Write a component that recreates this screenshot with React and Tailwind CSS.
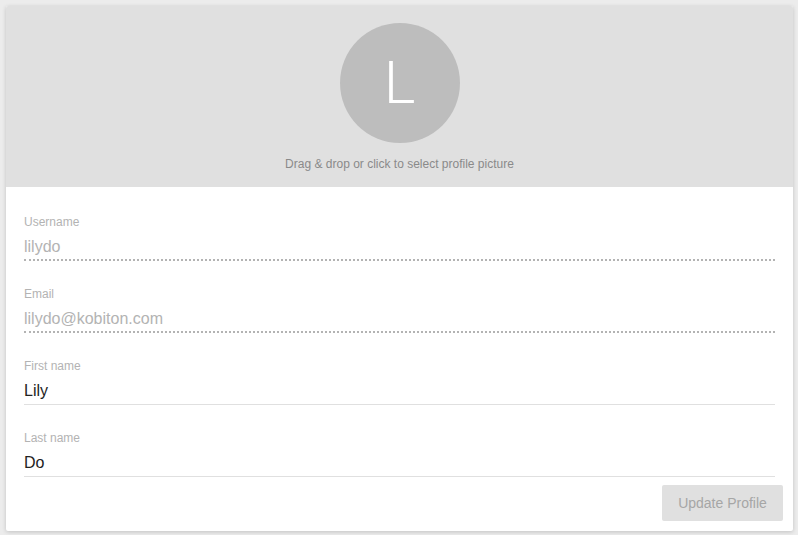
import React from "react";

const fields = [
  { label: "Username", value: "lilydo", disabled: true },
  { label: "Email", value: "lilydo@kobiton.com", disabled: true },
  { label: "First name", value: "Lily", disabled: false },
  { label: "Last name", value: "Do", disabled: false },
];

function Field({ label, value, disabled, last }) {
  return (
    <div className={last ? "pt-[1px]" : "h-[72px] pt-[1px]"}>
      <div className="text-[12px] leading-4 text-[#b3b3b3]">{label}</div>
      <div
        className={`mt-[5px] text-[16px] leading-6 ${
          disabled
            ? "text-[#b3b3b3] border-b-2 border-dotted border-[#b3b3b3]"
            : "text-[#222] pb-[1px] border-b border-[#e0e0e0]"
        }`}
      >
        {value}
      </div>
    </div>
  );
}

export default function App() {
  return (
    <div
      className="w-[798px] h-[535px] bg-[#ececec] pt-[6px] pl-[6px]"
      style={{ fontFamily: '"Liberation Sans", Arial, sans-serif' }}
    >
      <div className="w-[787px] h-[525px] bg-white rounded-[2px] shadow-[0_1px_4px_rgba(0,0,0,0.18)] overflow-hidden">
        {/* avatar dropzone */}
        <div className="h-[181px] bg-[#e0e0e0] flex flex-col items-center pt-[17px] cursor-pointer">
          <div className="w-[120px] h-[120px] rounded-full bg-[#bdbdbd] flex items-center justify-center">
            <span
              className="text-white text-[60px] font-light leading-none"
              style={{ fontFamily: '"Roboto", "Liberation Sans", sans-serif' }}
            >
              L
            </span>
          </div>
          <div className="mt-[13px] text-[12px] leading-4 text-[#8a8a8a]">
            Drag &amp; drop or click to select profile picture
          </div>
        </div>

        <div className="px-[18px] pt-[26px]">
          {fields.map((f, i) => (
            <Field key={f.label} {...f} last={i === fields.length - 1} />
          ))}
        </div>

        <div className="flex justify-end pr-[10px] mt-[8px]">
          <button
            disabled
            className="w-[121px] h-[36px] rounded-[2px] bg-[#e0e0e0] text-[#a6a6a6] text-[14px]"
          >
            Update Profile
          </button>
        </div>
      </div>
    </div>
  );
}
